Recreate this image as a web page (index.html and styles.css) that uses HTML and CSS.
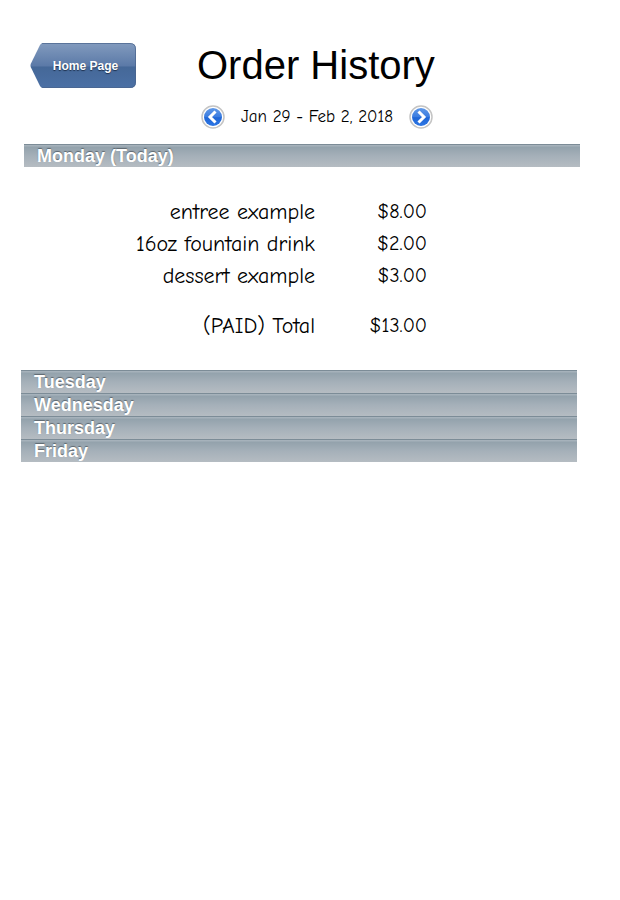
FILE: index.html
```
<!DOCTYPE html>
<html lang="en">
<head>
<meta charset="utf-8">
<meta name="viewport" content="width=device-width, initial-scale=1">
<title>Order History</title>
<link rel="stylesheet" href="styles.css">
</head>
<body>
<header class="header">
  <a class="home" href="#">
    <svg class="home-shape" viewBox="0 0 106 46" preserveAspectRatio="none" aria-hidden="true">
      <defs><linearGradient id="home-fill" x1="0" y1="0" x2="0" y2="1">
        <stop offset="0" stop-color="#829bbe"/><stop offset=".5" stop-color="#5c7aa8"/>
        <stop offset=".54" stop-color="#456898"/><stop offset="1" stop-color="#4b70a5"/>
      </linearGradient></defs>
      <path d="M13 1H100Q106 1 106 7V40Q106 46 100 46H13Q11 46 10 44L.7 25Q.2 23.500 .7 22L10 3Q11 1 13 1Z" fill="url(#home-fill)"/>
      <path d="M12 1.500H100Q105.500 1.500 105.500 7V40Q105.500 45.500 100 45.500H12" stroke="#4a648c" stroke-opacity=".7" fill="none"/>
    </svg>
    <span class="home-label">Home Page</span>
  </a>
  <h1 class="title">Order History</h1>
</header>
<nav class="week" aria-label="Week">
  <button class="arrow" type="button" aria-label="Previous week">
    <svg viewBox="0 0 24 24" aria-hidden="true">
      <defs><linearGradient id="disc" x1="0" y1="0" x2="0" y2="1">
        <stop offset="0" stop-color="#5f98e8"/><stop offset=".48" stop-color="#3c7de0"/>
        <stop offset=".54" stop-color="#1f66d6"/><stop offset="1" stop-color="#2d76e4"/>
      </linearGradient></defs>
      <circle cx="12" cy="12" r="11" fill="#fff" stroke="#c4c4c4" stroke-width="1.500"/>
      <circle cx="12" cy="12" r="9" fill="url(#disc)"/>
      <path d="M14.500 6.500L9 12L14.500 17.500" fill="none" stroke="#fff" stroke-width="3"/>
    </svg>
  </button>
  <span class="dates">Jan 29 - Feb 2, 2018</span>
  <button class="arrow" type="button" aria-label="Next week">
    <svg viewBox="0 0 24 24" aria-hidden="true">
      <circle cx="12" cy="12" r="11" fill="#fff" stroke="#c4c4c4" stroke-width="1.500"/>
      <circle cx="12" cy="12" r="9" fill="url(#disc)"/>
      <path d="M9.500 6.500L15 12L9.500 17.500" fill="none" stroke="#fff" stroke-width="3"/>
    </svg>
  </button>
</nav>
<main>
  <section class="today">
    <h2 class="day">Monday (Today)</h2>
    <table class="order">
      <tbody>
        <tr><th scope="row">entree example</th><td>$8.00</td></tr>
        <tr><th scope="row">16oz fountain drink</th><td>$2.00</td></tr>
        <tr><th scope="row">dessert example</th><td>$3.00</td></tr>
      </tbody>
      <tfoot>
        <tr><th scope="row">(PAID) Total</th><td>$13.00</td></tr>
      </tfoot>
    </table>
  </section>
  <section class="days">
    <h2 class="day">Tuesday</h2>
    <h2 class="day">Wednesday</h2>
    <h2 class="day">Thursday</h2>
    <h2 class="day">Friday</h2>
  </section>
</main>
</body>
</html>
```
FILE: styles.css
```
* { box-sizing: border-box; }
body {
  margin: 0;
  background: #fff;
  color: #000;
  font-family: "Liberation Sans", Arial, sans-serif;
}
.header {
  display: flex;
  align-items: center;
  gap: 61px;
  padding: 42px 30px 0;
}
.home {
  display: grid;
  width: 106px;
  height: 46px;
  color: #fff;
  text-decoration: none;
}
.home-shape, .home-label { grid-area: 1 / 1; }
.home-shape { width: 100%; height: 100%; }
.home-label {
  z-index: 1;
  place-self: center;
  padding: 2px 0 0 5px;
  font-size: 12px;
  font-weight: bold;
  text-shadow: 0 1px 1px #1d2f4c;
}
.title {
  margin: 0;
  font-size: 40px;
  font-weight: normal;
  line-height: 46px;
}
.week {
  display: flex;
  align-items: center;
  justify-content: center;
  padding: 16px 0 14px 14px;
}
.arrow {
  width: 24px;
  height: 24px;
  padding: 0;
  border: 0;
  background: none;
}
.arrow svg { display: block; }
.dates {
  width: 184px;
  text-align: center;
  white-space: nowrap;
  font-size: 17px;
  line-height: 26px;
}
.dates, .order { font-family: "Comic Sans MS", "Comic Neue", "Open Sans", sans-serif; }
.today { padding: 0 40px 0 24px; }
.days { padding: 0 43px 0 21px; }
.day {
  height: 23px;
  margin: 0;
  padding-left: 13px;
  border-top: 1px solid #7c8c97;
  background: linear-gradient(#a6b2bb 0 1px, #93a2ac 2px, #a5b0b9 50%, #b5bcc2);
  color: #fff;
  font-size: 18px;
  line-height: 23px;
  text-shadow: 0 -1px 1px #5c666e;
}
.order {
  margin: 29px 0 28px 111px;
  border-collapse: collapse;
}
.order th, .order td {
  height: 32px;
  padding: 0;
  line-height: 32px;
  text-align: right;
  white-space: nowrap;
  font-weight: normal;
}
.order th { width: 180px; font-size: 22px; }
.order td { width: 112px; font-size: 20px; }
.order tfoot th, .order tfoot td {
  height: 50px;
  padding-top: 18px;
}
```
